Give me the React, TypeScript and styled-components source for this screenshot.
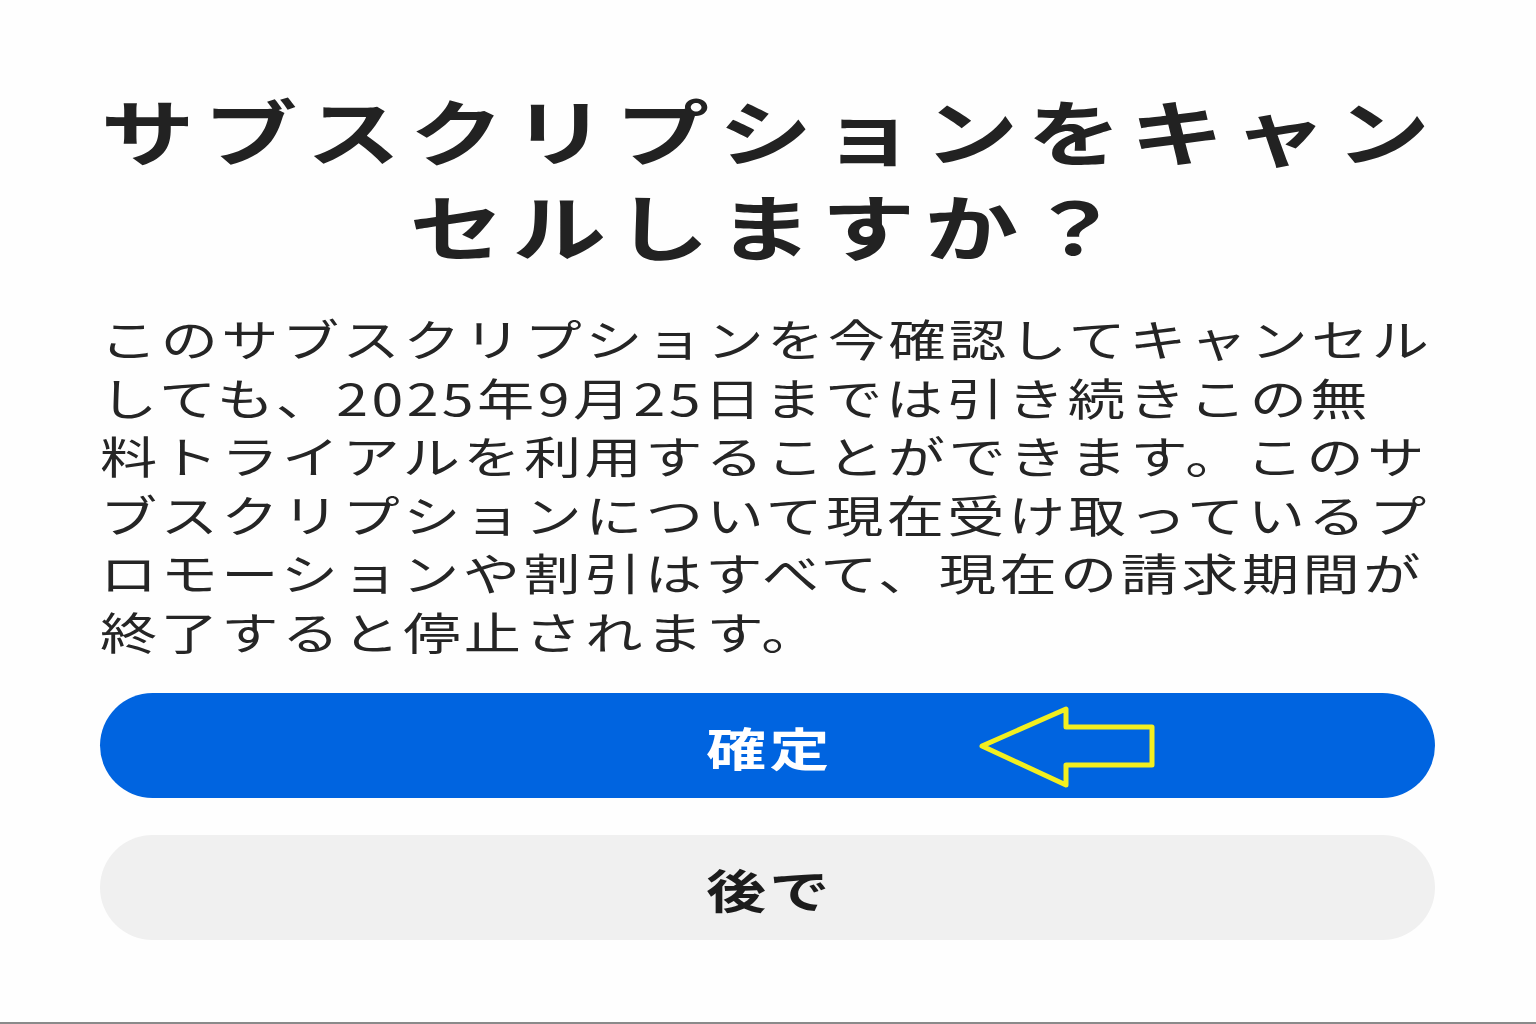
import React from 'react';
import styled, { createGlobalStyle } from 'styled-components';

const GlobalStyle = createGlobalStyle`
  html, body {
    margin: 0;
    padding: 0;
    background: #fefefe;
  }
  body {
    font-family: "Noto Sans CJK JP", "Noto Sans", sans-serif;
  }
`;

// the screenshot is stretched sideways, so text gets widened by this factor
const STRETCH = 1.3;

type ToneProps = {
  $tone: 'primary' | 'secondary'
};

const bodyLines = [
  'このサブスクリプションを今確認してキャンセル',
  'しても、2025年9月25日までは引き続きこの無',
  '料トライアルを利用することができます。このサ',
  'ブスクリプションについて現在受け取っているプ',
  'ロモーションや割引はすべて、現在の請求期間が',
  '終了すると停止されます。',
];

const App = () => {
  return (
    <>
      <GlobalStyle />
      <Screen>
        <Dialog>
          <Title>
            サブスクリプションをキャン<br />セルしますか？
          </Title>
          <Body>
            {bodyLines.map((line, i) => (
              <React.Fragment key={i}>
                {line}
                {i < bodyLines.length - 1 && <br />}
              </React.Fragment>
            ))}
          </Body>
          <Actions>
            <PillButton $tone="primary">
              <Label $tone="primary">確定</Label>
              <Pointer width="200" height="105" viewBox="0 0 200 105">
                <polygon
                  points="12,53 96,16 96,34 182,34 182,72 96,72 96,92"
                  fill="none"
                  stroke="#f3ef1f"
                  strokeWidth="5"
                  strokeLinejoin="round"
                />
              </Pointer>
            </PillButton>
            <PillButton $tone="secondary">
              <Label $tone="secondary">後で</Label>
            </PillButton>
          </Actions>
        </Dialog>
      </Screen>
    </>
  );
};

export default App;

const Screen = styled.div`
  height: 1024px;
  box-sizing: border-box;
  border-bottom: 2px solid #8a8a8a;
  background: #fefefe;
  overflow: hidden;
`;

const Dialog = styled.div`
  padding: 81px 100px 0 100px;
  display: flex;
  flex-direction: column;
`;

const Title = styled.h1`
  margin: 0;
  width: ${1340 / STRETCH}px;
  font-size: 72px;
  line-height: 95px;
  font-weight: 700;
  letter-spacing: 7.2px;
  color: #222;
  text-align: center;
  white-space: nowrap;
  transform: scaleX(${STRETCH});
  transform-origin: left top;
`;

const Body = styled.p`
  margin: 38px 0 0 0;
  width: ${1340 / STRETCH}px;
  font-size: 44px;
  line-height: 58.5px;
  font-weight: 400;
  letter-spacing: 2.65px;
  color: #252525;
  white-space: nowrap;
  transform: scaleX(${STRETCH});
  transform-origin: left top;
`;

const Actions = styled.div`
  margin-top: 33px;
  display: flex;
  flex-direction: column;
  gap: 37px;
`;

const PillButton = styled.div<ToneProps>`
  position: relative;
  height: 105px;
  width: 1335px;
  border-radius: 53px;
  background: ${(props) => (props.$tone === 'primary' ? '#0064e0' : '#f0f0f0')};
  display: flex;
  align-items: center;
  justify-content: center;
`;

const Label = styled.span<ToneProps>`
  display: inline-block;
  font-size: 46px;
  font-weight: 700;
  letter-spacing: 2.5px;
  padding-left: 2.5px;
  color: ${(props) => (props.$tone === 'primary' ? '#fff' : '#1c1c1c')};
  transform: scaleX(${STRETCH});
`;

const Pointer = styled.svg`
  position: absolute;
  left: 870px;
  top: 0;
`;
